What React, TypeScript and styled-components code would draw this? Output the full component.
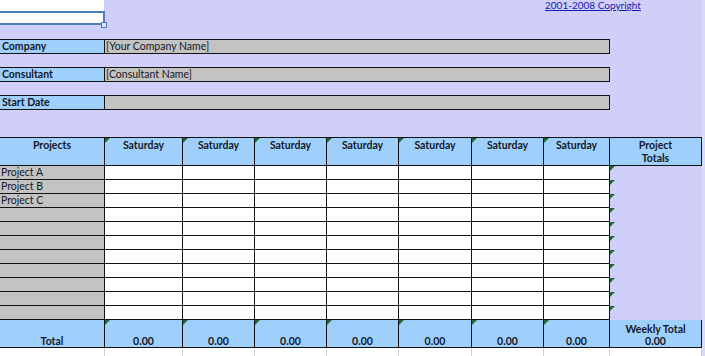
import { Fragment } from "react";
import styled, { createGlobalStyle } from "styled-components";

const GlobalStyle = createGlobalStyle`
  html, body {
    margin: 0;
    padding: 0;
    background: #dadaf6;
  }
  body {
    font-family: Lato, "Liberation Sans", sans-serif;
    color: #141828;
  }
`;

const BLUE = "#9fcffb";
const GRAY = "#c3c3c3";
const LINE = "#121212";

const columns = [105, 78, 72, 72, 72, 73, 72, 66, 92];
const days = Array.from({ length: 7 }, () => "Saturday");
const projects = ["Project A", "Project B", "Project C", "", "", "", "", "", "", "", ""];

const Sheet = styled.div`
  width: 702px;
  height: 356px;
  overflow: hidden;
  background: #cfcffa;
  font-size: 10.5px;
`;

const TopArea = styled.div`
  display: grid;
  grid-template-columns: 104px 441px auto;
  height: 39px;
`;

const ActiveCell = styled.div`
  position: relative;
  height: 25px;
  background: #ffffff;
`;

const Selection = styled.div`
  position: absolute;
  left: -2px;
  top: 11px;
  width: 103px;
  height: 10px;
  border: 2px solid #4f7cbc;
`;

const Handle = styled.div`
  position: absolute;
  left: 101px;
  top: 22px;
  width: 4px;
  height: 4px;
  border: 1px solid #4f7cbc;
  background: #dce6f4;
`;

const CopyrightLink = styled.a`
  grid-column: 3;
  align-self: start;
  font-size: 10px;
  line-height: 10px;
  color: #1c1cab;
  text-decoration: underline;
  white-space: nowrap;
`;

const Form = styled.div`
  display: flex;
  flex-direction: column;
  gap: 13px;
`;

const Field = styled.div`
  display: flex;
  width: 610px;
  height: 15px;
  box-sizing: border-box;
  border: 1px solid ${LINE};
  border-left: none;
`;

const FieldLabel = styled.div`
  width: 105px;
  box-sizing: border-box;
  border-right: 1px solid ${LINE};
  background: ${BLUE};
  font-weight: 700;
  padding-left: 2px;
  line-height: 13px;
`;

const FieldValue = styled.div`
  flex: 1;
  background: ${GRAY};
  padding-left: 1px;
  line-height: 13px;
`;

const Grid = styled.div`
  display: grid;
  grid-template-columns: ${columns.map((c) => `${c}px`).join(" ")};
  width: 702px;
  margin-top: 27px;
  border-top: 1px solid ${LINE};
`;

const Cell = styled.div<{ $flag?: boolean }>`
  position: relative;
  box-sizing: border-box;

  &::before {
    content: "";
    display: ${(p) => (p.$flag ? "block" : "none")};
    position: absolute;
    left: 0;
    top: 0;
    border-top: 5px solid #1d6b36;
    border-right: 5px solid transparent;
  }
`;

const HeadCell = styled(Cell)`
  height: 28px;
  border-right: 1px solid ${LINE};
  border-bottom: 1px solid ${LINE};
  background: ${BLUE};
  font-weight: 700;
  text-align: center;
  padding-top: 1px;
  line-height: 13px;
`;

const BodyCell = styled(Cell)<{ $label?: boolean }>`
  height: 14px;
  border-right: 1px solid ${LINE};
  border-bottom: 1px solid ${LINE};
  background: ${(p) => (p.$label ? GRAY : "#ffffff")};
  padding-left: 1px;
  line-height: 13px;
  white-space: nowrap;
`;

const SumCell = styled(Cell)`
  height: 14px;
`;

const TotalCell = styled(Cell)`
  height: 28px;
  display: flex;
  flex-direction: column;
  justify-content: flex-end;
  align-items: center;
  border-right: 1px solid ${LINE};
  border-bottom: 1px solid ${LINE};
  background: ${BLUE};
  font-weight: 700;
  line-height: 12px;
`;

const FillerCell = styled.div`
  height: 20px;
  box-sizing: border-box;
  border-right: 1px solid #d2d2d2;
  background: #ffffff;
`;

const App = () => {
  return (
    <>
      <GlobalStyle />
      <Sheet>
        <TopArea>
          <ActiveCell>
            <Selection />
            <Handle />
          </ActiveCell>
          <CopyrightLink href="#">2001-2008 Copyright</CopyrightLink>
        </TopArea>

        <Form>
          <Field>
            <FieldLabel>Company</FieldLabel>
            <FieldValue>[Your Company Name]</FieldValue>
          </Field>
          <Field>
            <FieldLabel>Consultant</FieldLabel>
            <FieldValue>[Consultant Name]</FieldValue>
          </Field>
          <Field>
            <FieldLabel>Start Date</FieldLabel>
            <FieldValue></FieldValue>
          </Field>
        </Form>

        <Grid>
          <HeadCell>Projects</HeadCell>
          {days.map((d, i) => (
            <HeadCell key={i} $flag>
              {d}
            </HeadCell>
          ))}
          <HeadCell>
            Project
            <br />
            Totals
          </HeadCell>

          {projects.map((name, r) => (
            <Fragment key={r}>
              <BodyCell $label>{name}</BodyCell>
              {days.map((_, c) => (
                <BodyCell key={c} />
              ))}
              <SumCell $flag />
            </Fragment>
          ))}

          <TotalCell>Total</TotalCell>
          {days.map((_, i) => (
            <TotalCell key={i} $flag>
              0.00
            </TotalCell>
          ))}
          <TotalCell>
            <span>Weekly Total</span>
            <span>0.00</span>
          </TotalCell>

          {columns.map((_, i) => (
            <FillerCell key={i} />
          ))}
        </Grid>
      </Sheet>
    </>
  );
};

export default App;
